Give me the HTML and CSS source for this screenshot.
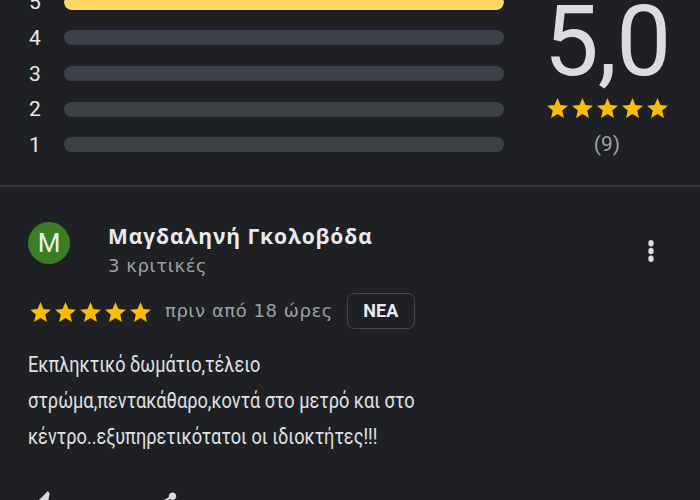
FILE: index.html
```html
<!DOCTYPE html>
<html lang="el">
<head>
<meta charset="utf-8">
<link rel="stylesheet" href="styles.css">
</head>
<body>
<div class="page">
  <section class="summary">
    <div class="bars">
      <div class="row"><span class="lbl">5</span><span class="bar"><span class="fill" style="width:100%"></span></span></div>
      <div class="row"><span class="lbl">4</span><span class="bar"></span></div>
      <div class="row"><span class="lbl">3</span><span class="bar"></span></div>
      <div class="row"><span class="lbl">2</span><span class="bar"></span></div>
      <div class="row"><span class="lbl">1</span><span class="bar"></span></div>
    </div>
    <div class="score">
      <div class="big">5,0</div>
      <div class="stars">
        <svg viewBox="0 0 24 24"><path d="M12 17.27L18.18 21l-1.64-7.03L22 9.24l-7.19-.61L12 2 9.19 8.63 2 9.24l5.46 4.73L5.82 21z"/></svg>
        <svg viewBox="0 0 24 24"><path d="M12 17.27L18.18 21l-1.64-7.03L22 9.24l-7.19-.61L12 2 9.19 8.63 2 9.24l5.46 4.73L5.82 21z"/></svg>
        <svg viewBox="0 0 24 24"><path d="M12 17.27L18.18 21l-1.64-7.03L22 9.24l-7.19-.61L12 2 9.19 8.63 2 9.24l5.46 4.73L5.82 21z"/></svg>
        <svg viewBox="0 0 24 24"><path d="M12 17.27L18.18 21l-1.64-7.03L22 9.24l-7.19-.61L12 2 9.19 8.63 2 9.24l5.46 4.73L5.82 21z"/></svg>
        <svg viewBox="0 0 24 24"><path d="M12 17.27L18.18 21l-1.64-7.03L22 9.24l-7.19-.61L12 2 9.19 8.63 2 9.24l5.46 4.73L5.82 21z"/></svg>
      </div>
      <div class="count">(9)</div>
    </div>
  </section>
  <div class="divider"></div>
  <article class="review">
    <header class="author">
      <div class="avatar">M</div>
      <div class="who">
        <div class="name">Μαγδαληνή Γκολοβόδα</div>
        <div class="sub">3 κριτικές</div>
      </div>
      <div class="more">
        <svg viewBox="0 0 24 24"><circle cx="12" cy="5" r="3"/><circle cx="12" cy="12" r="3"/><circle cx="12" cy="19" r="3"/></svg>
      </div>
    </header>
    <div class="meta">
      <div class="stars">
        <svg viewBox="0 0 24 24"><path d="M12 17.27L18.18 21l-1.64-7.03L22 9.24l-7.19-.61L12 2 9.19 8.63 2 9.24l5.46 4.73L5.82 21z"/></svg>
        <svg viewBox="0 0 24 24"><path d="M12 17.27L18.18 21l-1.64-7.03L22 9.24l-7.19-.61L12 2 9.19 8.63 2 9.24l5.46 4.73L5.82 21z"/></svg>
        <svg viewBox="0 0 24 24"><path d="M12 17.27L18.18 21l-1.64-7.03L22 9.24l-7.19-.61L12 2 9.19 8.63 2 9.24l5.46 4.73L5.82 21z"/></svg>
        <svg viewBox="0 0 24 24"><path d="M12 17.27L18.18 21l-1.64-7.03L22 9.24l-7.19-.61L12 2 9.19 8.63 2 9.24l5.46 4.73L5.82 21z"/></svg>
        <svg viewBox="0 0 24 24"><path d="M12 17.27L18.18 21l-1.64-7.03L22 9.24l-7.19-.61L12 2 9.19 8.63 2 9.24l5.46 4.73L5.82 21z"/></svg>
      </div>
      <span class="time">πριν από 18 ώρες</span>
      <span class="badge">ΝΕΑ</span>
    </div>
    <p class="text">Εκπληκτικό δωμάτιο,τέλειο στρώμα,πεντακάθαρο,κοντά στο μετρό και στο κέντρο..εξυπηρετικότατοι οι ιδιοκτήτες!!!</p>
    <div class="actions">
      <svg class="like" viewBox="0 0 24 24"><path d="M1 21h4V9H1v12zm22-11c0-1.1-.9-2-2-2h-6.31l.95-4.57.03-.32c0-.41-.17-.79-.44-1.06L14.17 1 7.59 7.59C7.22 7.95 7 8.45 7 9v10c0 1.1.9 2 2 2h9c.83 0 1.54-.5 1.84-1.22l3.02-7.05c.09-.23.14-.47.14-.73v-2z"/></svg>
      <svg class="share" viewBox="0 0 24 24"><path d="M18 16.08c-.76 0-1.44.3-1.96.77L8.91 12.7c.05-.23.09-.46.09-.7s-.04-.47-.09-.7l7.05-4.11c.54.5 1.25.81 2.04.81 1.66 0 3-1.34 3-3s-1.34-3-3-3-3 1.34-3 3c0 .24.04.47.09.7L8.04 9.81C7.5 9.31 6.79 9 6 9c-1.66 0-3 1.34-3 3s1.34 3 3 3c.79 0 1.5-.31 2.04-.81l7.12 4.16c-.05.21-.08.43-.08.65 0 1.61 1.31 2.920 2.92 2.92s2.92-1.31 2.92-2.92-1.31-2.92-2.92-2.92z"/></svg>
    </div>
  </article>
</div>
</body>
</html>
```

FILE: styles.css
```css
html, body {
  margin: 0;
  padding: 0;
  background: #1f2024;
  overflow: hidden;
}
.page {
  width: 700px;
  height: 500px;
  overflow: hidden;
  font-family: Roboto, "Noto Sans", sans-serif;
  color: #e8eaed;
}
.summary {
  display: flex;
  margin-top: -15.5px;
}
.bars {
  display: flex;
  flex-direction: column;
}
.row {
  height: 35.67px;
  display: flex;
  align-items: center;
  padding-left: 24px;
}
.lbl {
  width: 22px;
  text-align: center;
  font-size: 21px;
  line-height: 24px;
  color: #e8eaed;
  margin-right: 18px;
}
.bar {
  width: 440px;
  height: 15px;
  border-radius: 8px;
  background: #3c4049;
  overflow: hidden;
  display: flex;
}
.fill {
  background: #fdd663;
  border-radius: 8px;
}
.score {
  margin-left: 40px;
  width: 126px;
  display: flex;
  flex-direction: column;
  align-items: center;
  padding-top: 8px;
}
.big {
  font-size: 98px;
  line-height: 98px;
  color: #dadce0;
  letter-spacing: -1px;
}
.stars {
  display: flex;
}
.stars svg {
  width: 25px;
  height: 25px;
  fill: #fbbc04;
}
.score .stars {
  margin-top: 5.5px;
}
.count {
  margin-top: 10.8px;
  font-size: 21px;
  line-height: 24px;
  color: #9aa0a6;
}
.divider {
  margin-top: 22px;
  height: 2px;
  background: #36383d;
}
.review {
  padding: 35px 0 0 28px;
}
.author {
  display: flex;
  align-items: flex-start;
}
.avatar {
  width: 42px;
  height: 42px;
  border-radius: 50%;
  background: #3a7d26;
  color: #e6f4ea;
  font-size: 26px;
  line-height: 42px;
  text-align: center;
  flex: none;
}
.who {
  margin-left: 38px;
  margin-top: 2.2px;
}
.name {
  font-family: "Open Sans", Roboto, sans-serif;
  font-size: 21px;
  line-height: 24px;
  font-weight: 700;
  color: #e8eaed;
  letter-spacing: 0.9px;
}
.sub {
  font-family: "DejaVu Sans", Roboto, sans-serif;
  margin-top: 6.6px;
  font-size: 18px;
  line-height: 22px;
  color: #9aa0a6;
  letter-spacing: 0.6px;
}
.more {
  margin-left: auto;
  margin-right: 37px;
  margin-top: 17px;
  width: 24px;
  height: 24px;
}
.more svg {
  width: 24px;
  height: 24px;
  fill: #dadce0;
  transform: scale(0.9, 1.1);
}
.meta {
  margin-top: 16px;
  display: flex;
  align-items: center;
  height: 36px;
}
.meta .stars {
  margin-top: 4px;
}
.time {
  font-family: "DejaVu Sans", Roboto, sans-serif;
  margin-left: 12px;
  font-size: 18px;
  color: #9aa0a6;
  letter-spacing: 0.55px;
}
.badge {
  margin-left: 14px;
  width: 66px;
  height: 34px;
  border: 1px solid #44474c;
  border-radius: 7px;
  display: flex;
  align-items: center;
  justify-content: center;
  font-size: 18px;
  font-weight: 700;
  color: #e8eaed;
}
.text {
  margin: 18.5px 0 0;
  width: 500px;
  font-size: 22px;
  line-height: 36px;
  color: #dfe1e5;
  transform: scaleX(0.825);
  transform-origin: left top;
}
.actions {
  margin-top: 35px;
  display: flex;
  gap: 90px;
  padding-left: 2px;
}
.actions svg {
  width: 30px;
  height: 30px;
  fill: #dadce0;
}
```
